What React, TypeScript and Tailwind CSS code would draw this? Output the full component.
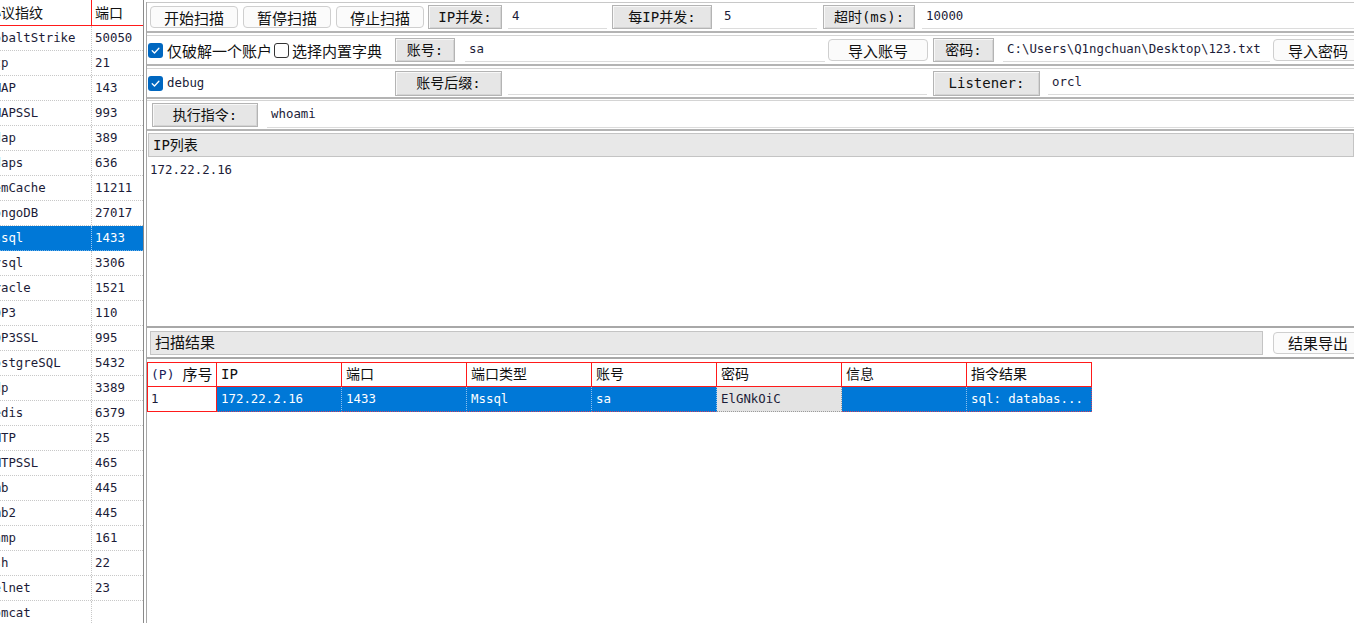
import React from "react";

const mono = "font-['DejaVu_Sans_Mono','Noto_Sans_CJK_SC',monospace]";
const cjk = "font-['Noto_Sans_CJK_SC','Noto_Sans',sans-serif]";

const protocols: [string, string][] = [
  ["CobaltStrike", "50050"],
  ["Ftp", "21"],
  ["IMAP", "143"],
  ["IMAPSSL", "993"],
  ["Ldap", "389"],
  ["Ldaps", "636"],
  ["MemCache", "11211"],
  ["MongoDB", "27017"],
  ["Mssql", "1433"],
  ["Mysql", "3306"],
  ["Oracle", "1521"],
  ["POP3", "110"],
  ["POP3SSL", "995"],
  ["PostgreSQL", "5432"],
  ["Rdp", "3389"],
  ["Redis", "6379"],
  ["SMTP", "25"],
  ["SMTPSSL", "465"],
  ["Smb", "445"],
  ["Smb2", "445"],
  ["Snmp", "161"],
  ["Ssh", "22"],
  ["Telnet", "23"],
  ["Tomcat", ""],
];

const columns = ["IP", "端口", "端口类型", "账号", "密码", "信息", "指令结果"];

const Check = ({ on }: { on: boolean }) =>
  on ? (
    <span className="w-[15px] h-[15px] rounded-[3px] bg-[#0067c0] flex items-center justify-center shrink-0">
      <svg width="11" height="11" viewBox="0 0 12 12">
        <path
          d="M2.4 6.3 L4.9 8.7 L9.7 3.5"
          fill="none"
          stroke="#fff"
          strokeWidth="1.4"
          strokeLinecap="round"
          strokeLinejoin="round"
        />
      </svg>
    </span>
  ) : (
    <span className="block w-[15px] h-[15px] rounded-[3px] border border-[#333] bg-white shrink-0" />
  );

const Btn = ({ className, children }: { className: string; children: React.ReactNode }) => (
  <button
    className={`${cjk} h-[22px] shrink-0 flex items-center justify-center text-[15px] leading-none text-[#111] bg-[#fbfbfb] border border-[#cfcfcf] rounded-[4px] ${className}`}
  >
    {children}
  </button>
);

const Label = ({ className, children }: { className: string; children: React.ReactNode }) => (
  <div
    className={`${mono} h-[24px] shrink-0 flex items-center justify-center text-[14px] leading-none text-[#111] bg-[#e6e6e6] border border-[#b4b4b4] shadow-[inset_1px_1px_0_#f8f8f8,inset_-1px_-1px_0_#d4d4d4] ${className}`}
  >
    {children}
  </div>
);

const Field = ({ className, children }: { className: string; children?: React.ReactNode }) => (
  <div
    className={`${mono} h-[24px] flex items-center pl-[4px] text-[12.4px] text-[#1c1c38] bg-white border-b border-[#dcdcdc] overflow-hidden whitespace-nowrap ${className}`}
  >
    {children}
  </div>
);

export default function App() {
  return (
    <div className="w-[1354px] h-[623px] overflow-hidden bg-white flex select-none">
      {/* protocol list */}
      <div className="w-[144px] shrink-0 h-full border-r border-[#8a8a8a] flex flex-col overflow-hidden">
        <div className="h-[26px] shrink-0 flex border-b border-[#ff1a1a]">
          <div className={`${cjk} w-[92px] border-r border-[#ff1a1a] overflow-hidden whitespace-nowrap flex items-center text-[14px] text-[#111]`}>
            <span className="-ml-[13px]">协议指纹</span>
          </div>
          <div className={`${cjk} flex-1 flex items-center pl-[3px] text-[14px] text-[#111]`}>端口</div>
        </div>
        {protocols.map(([name, port], i) => {
          const sel = i === 8;
          return (
            <div
              key={name}
              className={`h-[25px] shrink-0 flex border-b border-dotted ${
                sel ? "bg-[#0078d7] text-white border-[#6fb0e8]" : "text-[#1c1c38] border-[#c8c8c8]"
              } ${mono} text-[12.4px]`}
            >
              <div
                className={`w-[92px] border-r border-dotted overflow-hidden whitespace-nowrap flex items-center ${
                  sel ? "border-[#9cc8f0]" : "border-[#c8c8c8]"
                }`}
              >
                <span className="-ml-[14px]">{name}</span>
              </div>
              <div className="flex-1 flex items-center pl-[3px]">{port}</div>
            </div>
          );
        })}
      </div>

      {/* main area */}
      <div className="flex-1 min-w-0 flex flex-col pt-[2px] pl-[2px]">
        <div className="flex-1 flex flex-col border-l border-[#a8a8a8] min-w-0">
          {/* row 1 */}
          <div className="h-[31px] shrink-0 flex items-center pl-[3px] border-t border-[#c8c8c8] border-b-2 border-b-[#b4b4b4]">
            <Btn className="w-[88px]">开始扫描</Btn>
            <Btn className="w-[88px] ml-[5px]">暂停扫描</Btn>
            <Btn className="w-[88px] ml-[5px]">停止扫描</Btn>
            <Label className="w-[74px] ml-[4px]">IP并发:</Label>
            <Field className="w-[99px] ml-[6px]">4</Field>
            <Label className="w-[100px] ml-[5px]">每IP并发:</Label>
            <Field className="w-[97px] ml-[8px]">5</Field>
            <Label className="w-[92px] ml-[6px]">超时(ms):</Label>
            <Field className="flex-1 ml-[7px]">10000</Field>
          </div>

          {/* row 2 */}
          <div className="h-[31px] shrink-0 flex items-center mt-[2px] border-t border-[#d4d4d4] border-b-2 border-b-[#b4b4b4]">
            <div className="w-[248px] shrink-0 flex items-center pl-[1px]">
              <Check on />
              <span className={`${cjk} ml-[4px] text-[15px] leading-none text-[#111] whitespace-nowrap`}>仅破解一个账户</span>
              <span className="ml-[2px] flex">
                <Check on={false} />
              </span>
              <span className={`${cjk} ml-[3px] text-[15px] leading-none text-[#111] whitespace-nowrap`}>选择内置字典</span>
            </div>
            <Label className="w-[60px]">账号:</Label>
            <Field className="w-[360px] ml-[10px] shrink-0">sa</Field>
            <Btn className="w-[100px] ml-[3px]">导入账号</Btn>
            <Label className="w-[61px] ml-[5px]">密码:</Label>
            <Field className="w-[267px] ml-[9px] shrink-0">C:\Users\Q1ngchuan\Desktop\123.txt</Field>
            <Btn className="w-[90px] ml-[3px]">导入密码</Btn>
          </div>

          {/* row 3 */}
          <div className="h-[31px] shrink-0 flex items-center mt-[2px] border-t border-[#d4d4d4] border-b-2 border-b-[#b4b4b4]">
            <div className="w-[243px] h-full shrink-0 bg-white flex items-center pl-[1px]">
              <Check on />
              <span className={`${mono} ml-[4px] text-[12.4px] text-[#1c1c38]`}>debug</span>
            </div>
            <Label className="w-[107px] ml-[5px] h-[25px]">账号后缀:</Label>
            <Field className="w-[419px] ml-[6px] shrink-0" />
            <Label className="w-[107px] ml-[6px] h-[25px]">Listener:</Label>
            <Field className="flex-1 ml-[8px]">orcl</Field>
          </div>

          {/* row 4 */}
          <div className="h-[31px] shrink-0 flex items-center pl-[5px] mt-[1px] border-t border-[#d4d4d4] border-b-2 border-b-[#b4b4b4]">
            <Label className="w-[106px] h-[23px]">执行指令:</Label>
            <Field className="flex-1 ml-[9px] h-[25px]">whoami</Field>
          </div>

          {/* IP list */}
          <div
            className={`${mono} h-[24px] shrink-0 mt-[2px] ml-[1px] flex items-center pl-[4px] text-[14px] text-[#111] bg-[#e8e8e8] border border-[#c4c4c4]`}
          >
            IP列表
          </div>
          <div className={`${mono} h-[169px] shrink-0 pl-[3px] pt-[4px] text-[12.4px] text-[#1c1c38] bg-white`}>
            172.22.2.16
          </div>

          {/* scan result bar */}
          <div className="h-[33px] shrink-0 flex items-center border-t-2 border-[#a8a8a8] border-b-2 border-b-[#a8a8a8]">
            <div className={`${cjk} w-[1113px] ml-[3px] h-[24px] shrink-0 flex items-center pl-[4px] text-[15px] text-[#111] bg-[#e8e8e8] border border-[#c4c4c4]`}>
              扫描结果
            </div>
            <Btn className="w-[90px] ml-[10px]">结果导出</Btn>
          </div>

          {/* result table */}
          <div className="mt-[3px] flex flex-col">
            <div className="flex h-[25px]">
              <div className={`w-[70px] shrink-0 flex items-center pl-[3px] border border-[#ff1a1a] ${mono} text-[14px] text-[#111]`}>
                <span className="text-[#1c1c58] text-[13px]">(P)</span>
                <span className={`${cjk} ml-[8px] text-[15px]`}>序号</span>
              </div>
              {columns.map((c) => (
                <div
                  key={c}
                  className={`${mono} w-[125px] shrink-0 flex items-center pl-[4px] border-t border-b border-r border-[#ff1a1a] text-[14px] text-[#111]`}
                >
                  {c}
                </div>
              ))}
            </div>
            <div className={`flex h-[25px] ${mono} text-[12.4px]`}>
              <div className="w-[70px] shrink-0 flex items-center pl-[3px] border-l border-r border-b border-[#ff1a1a] text-[#1c1c38] bg-white">
                1
              </div>
              {["172.22.2.16", "1433", "Mssql", "sa", "ElGNkOiC", "", "sql: databas..."].map((v, i) =>
                i === 4 ? (
                  <div
                    key={i}
                    className="w-[125px] shrink-0 flex items-center pl-[4px] bg-[#e3e3e3] text-[#1c1c38] border-r border-b border-dotted border-[#9a9a9a]"
                  >
                    {v}
                  </div>
                ) : (
                  <div
                    key={i}
                    className={`w-[125px] shrink-0 flex items-center pl-[4px] bg-[#0078d7] text-white border-b border-dotted border-b-[#d04060] ${
                      i === 6 ? "border-r border-r-[#d04060]" : "border-r border-r-[#8cc0ee]"
                    }`}
                  >
                    {v}
                  </div>
                )
              )}
            </div>
          </div>
        </div>
      </div>
    </div>
  );
}
